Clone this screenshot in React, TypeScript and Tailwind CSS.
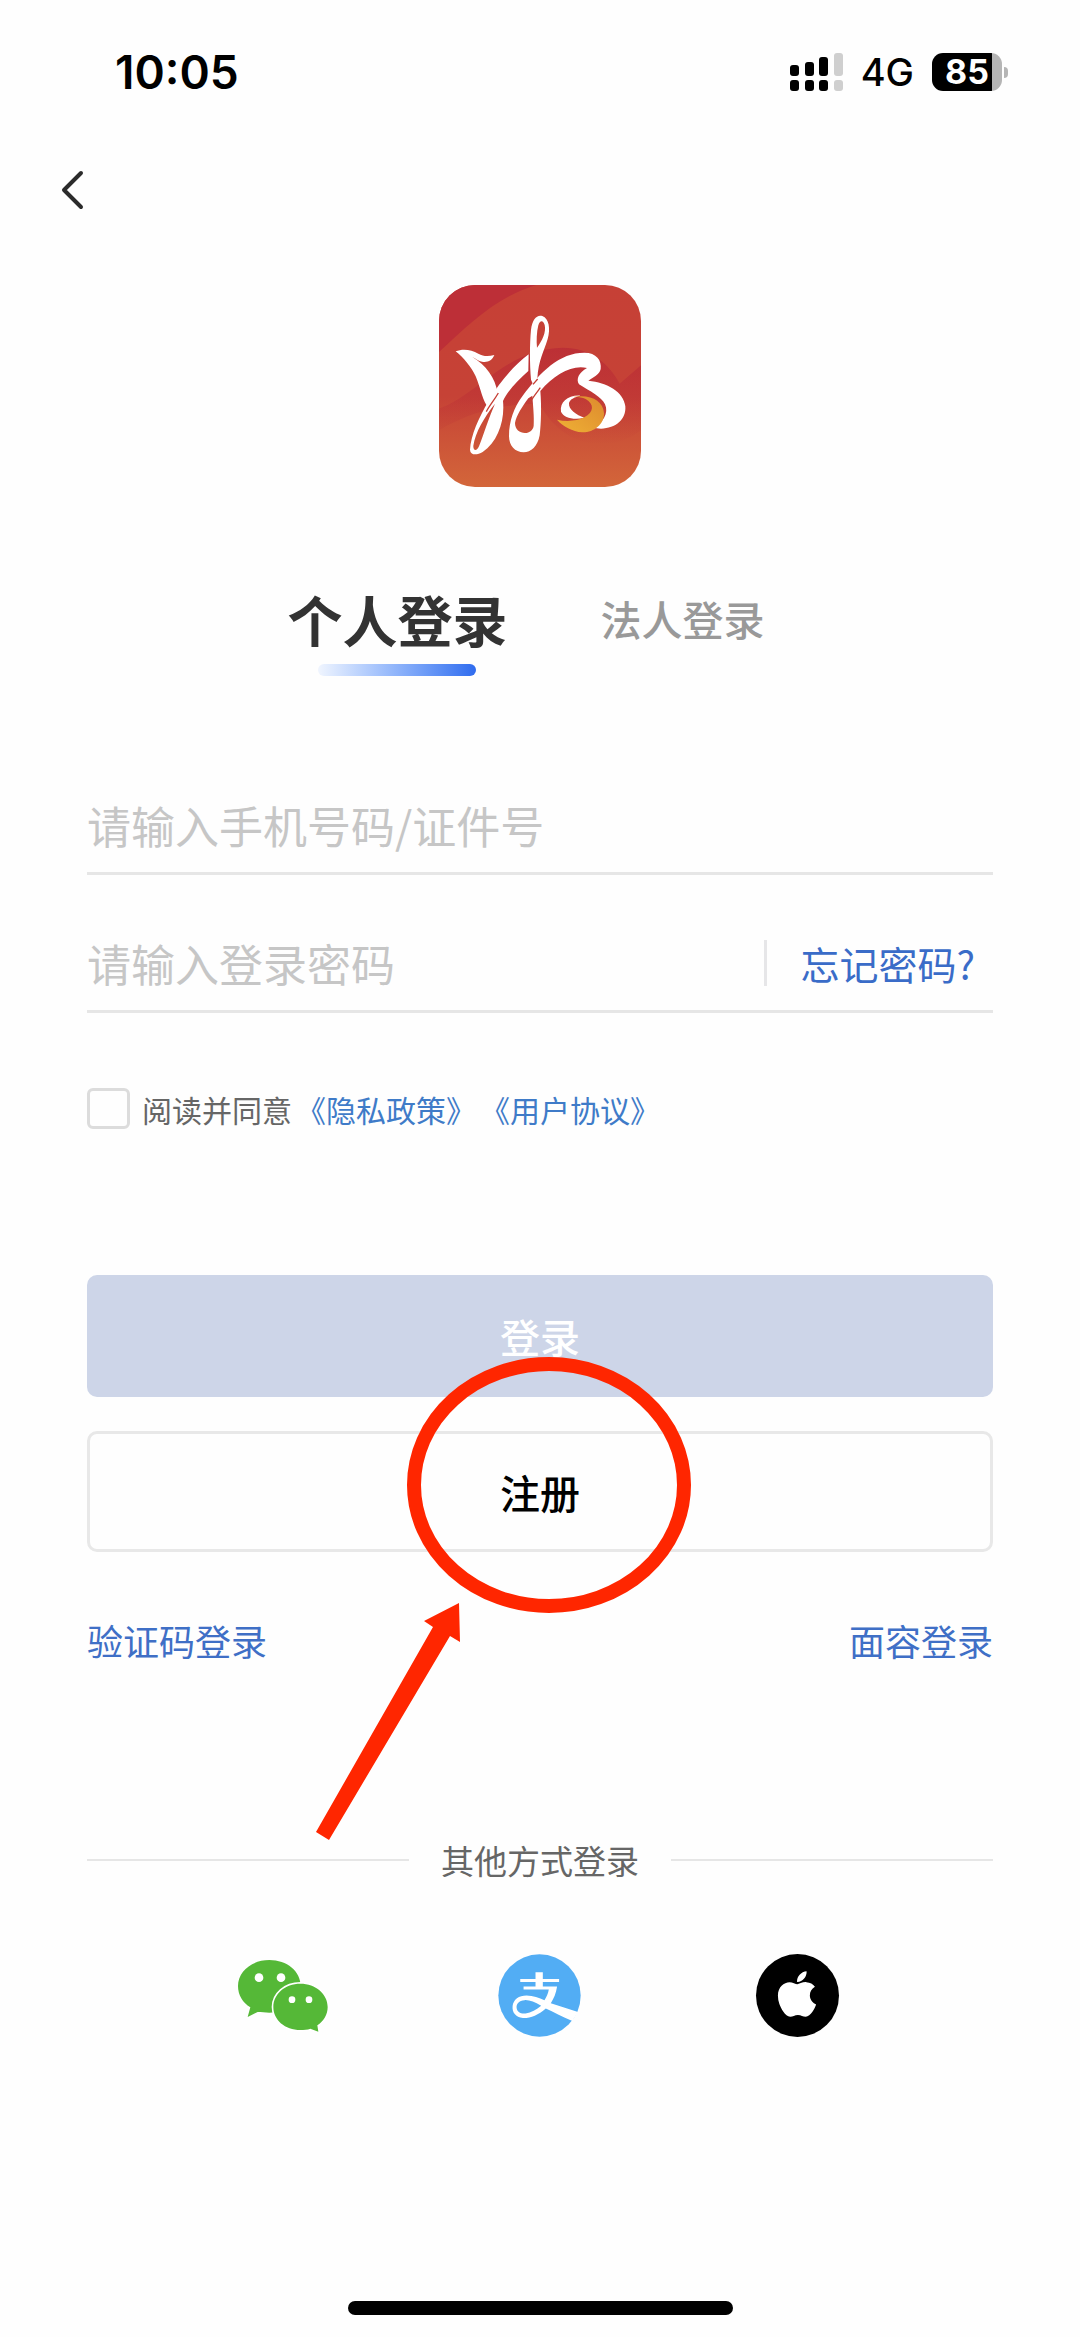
import type { ReactNode } from "react";
import { useState } from "react";
import { FaApple } from "react-icons/fa";

const SIGNAL_BARS = [
  { x: 0, top: 12, color: "#000" },
  { x: 15, top: 9, color: "#000" },
  { x: 29, top: 4, color: "#000" },
  { x: 44, top: 0, color: "#cfcfcf" },
];

function SignalIcon() {
  return (
    <svg viewBox="0 0 53 38" className="h-[38px] w-[53px]" aria-hidden="true">
      {SIGNAL_BARS.map((bar) => (
        <g key={bar.x} fill={bar.color}>
          <rect x={bar.x} y={bar.top} width="9" height={23 - bar.top} rx="3" />
          <rect x={bar.x} y="27" width="9" height="11" rx="3" />
        </g>
      ))}
    </svg>
  );
}

function Battery({ level }: { level: number }) {
  return (
    <div className="flex items-center gap-[2px]">
      <div className="flex h-[38px] w-[70px] items-center justify-center rounded-[11px] bg-linear-to-r from-black from-85% to-[#b5b5b5] to-85% text-[34px] leading-none font-bold text-white">
        {level}
      </div>
      <span className="h-[11px] w-1 rounded-r-full bg-[#b5b5b5]" />
    </div>
  );
}

function StatusBar() {
  return (
    <header className="flex h-36 items-center justify-between pr-[72px] pl-[115px] font-[Inter,sans-serif] text-black">
      <span className="text-[46px] leading-none font-semibold">10:05</span>
      <div className="flex items-center gap-[18px]">
        <SignalIcon />
        <span className="text-[38px] leading-none font-medium">4G</span>
        <Battery level={85} />
      </div>
    </header>
  );
}

function AppLogo() {
  return (
    <svg
      viewBox="58 44 606 606"
      className="size-[202px] self-center rounded-[36px]"
      role="img"
      aria-label="湘"
    >
      <defs>
        <linearGradient id="logo-bg" x1="0" y1="0" x2="0" y2="1">
          <stop offset="0" stopColor="#c64036" />
          <stop offset="0.55" stopColor="#c64236" />
          <stop offset="1" stopColor="#d3663a" />
        </linearGradient>
        <linearGradient id="logo-shade" x1="0" y1="0" x2="0" y2="1">
          <stop offset="0" stopColor="#b52435" stopOpacity="0.6" />
          <stop offset="1" stopColor="#b52435" stopOpacity="0" />
        </linearGradient>
        <linearGradient id="logo-gold" x1="0" y1="1" x2="1" y2="0">
          <stop offset="0" stopColor="#efb135" />
          <stop offset="1" stopColor="#dd8a2e" />
        </linearGradient>
      </defs>
      <rect x="58" y="44" width="606" height="606" fill="url(#logo-bg)" />
      <path d="M58 44H350C230 80 150 160 58 245Z" fill="#bd2f37" />
      <path d="M58 415C180 370 260 235 430 232C510 232 570 280 600 340L664 285V480C560 560 420 520 360 400C260 400 160 420 58 480Z" fill="url(#logo-shade)" />
      <g fill="#fff">
        <path d="M108 243C130 234 155 238 176 250C192 259 207 258 224 254C218 270 204 277 187 274C176 272 168 265 158 260C198 284 227 322 234 368L207 412C190 398 182 350 168 318C155 290 132 262 108 243Z" />
        <path
          fillRule="evenodd"
          d="M327 252C282 286 240 334 207 392C178 440 153 496 151 538C152 556 172 555 189 545C234 515 256 452 250 392C266 358 297 328 326 302ZM226 400C208 440 193 490 178 528C172 543 160 543 161 526C167 486 194 440 226 400Z"
        />
        <path
          fillRule="evenodd"
          d="M334 328C330 280 330 220 334 178C338 146 352 132 368 137C388 144 393 176 384 206C374 240 356 270 353 325L340 342ZM352 232C368 210 380 186 375 164C371 150 361 148 356 165C351 185 350 212 352 232Z"
        />
        <path d="M268 498C268 452 283 412 308 378C362 304 420 247 494 247C530 247 547 270 543 296C540 312 520 322 506 331C562 336 612 364 617 408C620 448 588 474 544 475L520 472C550 458 568 428 556 402C546 380 510 362 478 342C468 326 478 306 502 293C458 282 404 312 362 362C366 410 364 460 360 495C354 528 334 546 312 546C286 546 268 526 268 498ZM326 384C308 408 290 436 286 458C286 478 300 488 316 488C330 488 341 478 342 466C344 440 340 405 338 376Z" />
        <path d="M482 376C444 374 420 396 424 424C432 442 462 450 494 442C470 434 446 418 448 398C451 386 466 380 482 376Z" />
      </g>
      <path d="M458 380C512 370 550 390 553 428C554 462 522 487 488 486C458 484 430 468 412 448C440 455 474 452 494 441C524 426 524 400 498 386C486 380 472 379 458 380Z" fill="url(#logo-gold)" />
      <path d="M236 368C222 392 208 408 200 424M362 352C350 368 340 380 330 398M340 342L354 326" fill="none" stroke="#c63f35" strokeWidth="4" />
    </svg>
  );
}

function WechatIcon() {
  return (
    <svg viewBox="0 0 270 216" className="h-[72px] w-[90px]" aria-hidden="true">
      <path d="M94 0C147 0 188 34 188 78S147 158 94 158C82 158 70 156 59 156L29 171L37 142C14 128 0 105 0 78C0 34 42 0 94 0Z" fill="#55b837" />
      <path
        d="M187 71C233 71 269 102 269 141C269 164 257 184 238 196L241 215L217 206C208 209 198 210 187 210C141 210 106 180 106 141S141 71 187 71Z"
        fill="#55b837"
        stroke="#fff"
        strokeWidth="10"
        paintOrder="stroke"
      />
      <g fill="#fff">
        <circle cx="63" cy="53" r="13" />
        <circle cx="129" cy="53" r="13" />
        <circle cx="162" cy="119" r="10" />
        <circle cx="213" cy="119" r="10" />
      </g>
    </svg>
  );
}

function AlipayIcon() {
  return (
    <svg viewBox="55 70 250 250" className="size-[83px]" aria-hidden="true">
      <circle cx="180" cy="195" r="124" fill="#52adf4" />
      <path d="M168 125H190V145H239V154H190V168H233C230 188 223 205 214 218L296 245L279 272C248 258 222 245 199 234C176 254 152 264 130 263C108 261 97 246 99 227C101 207 118 195 141 195C161 195 179 202 195 209C201 200 206 190 208 177H132V168H168V154H122V145H168ZM185 226C165 215 150 208 135 209C118 211 110 219 111 232C112 245 124 251 138 249C155 247 171 238 185 226Z" fill="#fff" />
    </svg>
  );
}

function AppleIcon() {
  return (
    <span className="flex size-[83px] items-center justify-center rounded-full bg-black pb-1 text-white">
      <FaApple className="size-[52px]" aria-hidden="true" />
    </span>
  );
}

// Red circle and arrow pointing the reader to the register button
function RegisterHint() {
  return (
    <svg
      viewBox="310 1350 390 500"
      className="pointer-events-none absolute -top-[81px] left-1/2 -ml-[230px] h-[500px] w-[390px]"
      aria-hidden="true"
    >
      <ellipse cx="549" cy="1485" rx="135" ry="121" fill="none" stroke="#ff2600" strokeWidth="14" />
      <path d="M459 1603L424 1621L433 1627L316 1832L329 1840L450 1636L460 1642Z" fill="#ff2600" />
    </svg>
  );
}

type TabProps = {
  label: string;
  active: boolean;
  onClick: () => void;
};

function LoginTab({ label, active, onClick }: TabProps) {
  return (
    <button
      type="button"
      role="tab"
      aria-selected={active}
      onClick={onClick}
      className="flex flex-col items-center gap-4"
    >
      <span
        className={
          active
            ? "text-[55px] leading-[60px] font-bold text-[#333]"
            : "text-[41px] leading-[60px] font-medium text-[#999]"
        }
      >
        {label}
      </span>
      {active && (
        <span className="h-3 w-[158px] rounded-full bg-linear-to-r from-[#f0f5fe] to-[#2f6bee]" />
      )}
    </button>
  );
}

function Provider({ label, children }: { label: string; children: ReactNode }) {
  return (
    <button type="button" aria-label={label} className="flex h-[83px] items-center justify-center">
      {children}
    </button>
  );
}

const TABS = ["个人登录", "法人登录"];

export default function App() {
  const [tab, setTab] = useState(TABS[0]);

  return (
    <div className="flex min-h-screen flex-col bg-[#fefefe] font-['Noto_Sans_CJK_SC',sans-serif]">
      <StatusBar />

      <nav className="flex h-[92px] items-center px-[59px]">
        <button type="button" aria-label="返回">
          <svg viewBox="0 0 26 42" className="h-[42px] w-[26px]" aria-hidden="true">
            <path
              d="M22 4L5 21L22 38"
              fill="none"
              stroke="#2b2b2b"
              strokeWidth="4"
              strokeLinecap="round"
              strokeLinejoin="round"
            />
          </svg>
        </button>
      </nav>

      <main className="flex flex-col px-[87px] pt-[49px]">
        <AppLogo />

        <div role="tablist" className="mt-[101px] flex items-start justify-center gap-[93px] pr-7">
          {TABS.map((label) => (
            <LoginTab key={label} label={label} active={tab === label} onClick={() => setTab(label)} />
          ))}
        </div>

        <form onSubmit={(e) => e.preventDefault()} className="mt-[102px] flex flex-col">
          <div className="flex border-b-3 border-[#e6e6e6]">
            <input
              type="text"
              aria-label="手机号码/证件号"
              placeholder="请输入手机号码/证件号"
              className="h-[94px] min-w-0 flex-1 text-[44px] outline-none placeholder:text-[#c6c6c6]"
            />
          </div>

          <div className="mt-[41px] flex items-center border-b-3 border-[#e6e6e6] pr-[18px]">
            <input
              type="password"
              aria-label="登录密码"
              placeholder="请输入登录密码"
              className="h-[94px] min-w-0 flex-1 text-[44px] outline-none placeholder:text-[#c6c6c6]"
            />
            <span className="mr-[34px] h-[46px] w-[3px] bg-[#e6e6e8]" />
            <a href="#forgot" className="text-[39px] leading-[48px] text-[#3a6cc8]">
              忘记密码?
            </a>
          </div>

          <div className="mt-[75px] flex h-[41px] items-center text-[30px] leading-9 text-[#666]">
            <input
              id="agree"
              type="checkbox"
              className="mr-3 h-[41px] w-[43px] appearance-none rounded-[6px] border-3 border-[#dcdcdc] checked:bg-[#3a6cc8]"
            />
            <label htmlFor="agree" className="mr-1">
              阅读并同意
            </label>
            <a href="#privacy" className="mr-1 text-[#3f7bc8]">
              《隐私政策》
            </a>
            <a href="#terms" className="text-[#3f7bc8]">
              《用户协议》
            </a>
          </div>

          <button
            type="submit"
            className="mt-[146px] h-[122px] rounded-[10px] bg-[#cdd5e8] text-[40px] font-medium text-white"
          >
            登录
          </button>
          <div className="relative mt-[34px] flex">
            <button
              type="button"
              className="h-[121px] flex-1 rounded-[10px] border-3 border-[#e8e8e8] text-[40px] font-medium text-black"
            >
              注册
            </button>
            <RegisterHint />
          </div>
        </form>

        <div className="mt-16 flex justify-between text-[36px] leading-[48px] text-[#3f6fc6]">
          <a href="#sms">验证码登录</a>
          <a href="#face">面容登录</a>
        </div>

        <div className="mt-[172px] flex items-center gap-8 text-[33px] leading-[48px] text-[#666]">
          <span className="h-[2px] flex-1 bg-[#e6e6e6]" />
          <h2>其他方式登录</h2>
          <span className="h-[2px] flex-1 bg-[#e6e6e6]" />
        </div>

        <div className="mt-[70px] grid grid-cols-3 px-[67px]">
          <Provider label="微信登录">
            <WechatIcon />
          </Provider>
          <Provider label="支付宝登录">
            <AlipayIcon />
          </Provider>
          <Provider label="Apple 登录">
            <AppleIcon />
          </Provider>
        </div>
      </main>

      <footer className="mt-auto flex justify-center pb-[22px]">
        <span className="h-[14px] w-[385px] rounded-full bg-black" />
      </footer>
    </div>
  );
}
